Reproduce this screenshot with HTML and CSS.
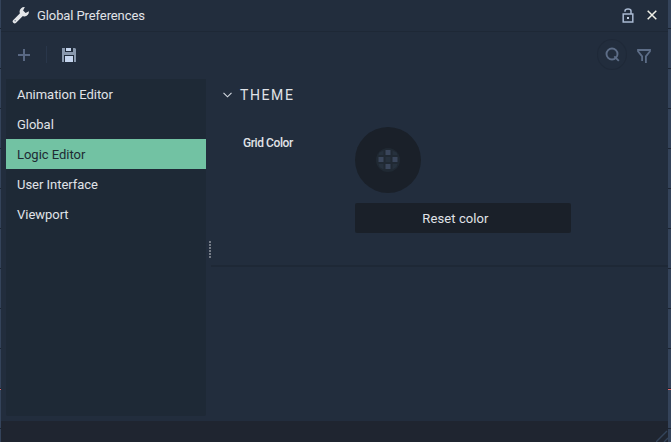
FILE: index.html
```html
<!DOCTYPE html>
<html lang="en">
<head>
<meta charset="utf-8">
<title>Global Preferences</title>
<link rel="stylesheet" href="styles.css">
</head>
<body>
<main class="window">
  <header class="titlebar">
    <svg class="wrench" width="18" height="18" viewBox="0 0 18 18"><path d="M2.7 15.3 10.2 7.8" stroke="#e4e6e9" stroke-width="4" stroke-linecap="round"/><path d="M12.8 1.1A4.7 4.7 0 1 0 16.9 5.2L13.6 6.9 11.1 4.4Z" fill="#e4e6e9"/><circle cx="3.2" cy="14.8" r=".8" fill="#758091"/></svg>
    <h1>Global Preferences</h1>
    <svg class="lock" width="12" height="15" viewBox="0 0 12 15" fill="none" stroke="#a9b9d2" stroke-width="1.5"><rect x="1.2" y="6" width="9.6" height="8"/><path d="M3 3.8V3Q3 1 6 1T9 3V6"/><rect x="5" y="9" width="2" height="2" fill="#c2cee0" stroke="none"/></svg>
    <svg class="close" width="10" height="10" viewBox="0 0 10 10" stroke="#f0f0e8" stroke-width="1.5"><path d="M.7.7 9.3 9.3M9.3.7.7 9.3"/></svg>
  </header>
  <div class="toolbar">
    <svg class="add" width="12" height="12" viewBox="0 0 12 12" stroke="#596883" stroke-width="2"><path d="M6 0V12M0 6H12"/></svg>
    <span class="separator"></span>
    <svg class="save" width="14" height="14" viewBox="0 0 14 14"><path d="M0 0H13L14 1V14H0Z" fill="#8998ad"/><path d="M3 0H11V4H3ZM2 7H12V14H2Z" fill="#202b3a"/><path d="M4 0H9V3H4ZM3 8H11V14H3Z" fill="#c5d5ee"/></svg>
    <span class="search"><svg width="15" height="15" viewBox="0 0 15 15" fill="none" stroke="#5d6d87" stroke-width="1.9"><circle cx="7" cy="7" r="5.5"/><path d="M9.3 9.3 13.8 13.8"/></svg></span>
    <svg class="filter" width="14" height="14" viewBox="0 0 14 14" fill="none" stroke="#5d6d87" stroke-width="1.8"><path d="M5.1 12V7.4L1 2.3V1H13V2.3L8.9 7.4V14"/></svg>
  </div>
  <div class="content">
    <nav class="categories">
      <div class="item">Animation Editor</div>
      <div class="item">Global</div>
      <div class="item selected">Logic Editor</div>
      <div class="item">User Interface</div>
      <div class="item">Viewport</div>
    </nav>
    <div class="splitter"><i></i><i></i><i></i><i></i><i></i><i></i></div>
    <section class="panel">
      <h2><svg width="9" height="6" viewBox="0 0 9 6" fill="none" stroke="#d5dae2" stroke-width="1.1"><path d="M.5.8 4.5 4.8 8.5.8"/></svg><span>THEME</span></h2>
      <div class="setting">
        <span class="label">Grid Color</span>
        <div class="control">
          <div class="wheel"><svg width="24" height="24" viewBox="0 0 24 24"><circle cx="12" cy="12" r="12" fill="#202933"/><path d="M9.5 2H14.5V7H9.5ZM2.5 9H7.5V14H2.5ZM16.5 9H21.5V14H16.5ZM9.5 16H14.5V21H9.5Z" fill="#3a465b"/><path d="M9.5 9H14.5V14H9.5ZM3.5 4.5 7.5 2.5V7H2.5ZM16.5 2.5 20.5 4.5 21.5 7H16.5ZM2.5 16H7.5V21.5L3.5 19ZM16.5 16H21.5L20.5 19 16.5 21.5Z" fill="#26313d"/></svg></div>
          <button>Reset color</button>
        </div>
      </div>
    </section>
  </div>
  <footer><svg width="12" height="12" viewBox="0 0 12 12" stroke="#34445a" stroke-width="1.4"><path d="M0 12 11 1M8 12 12 8"/></svg></footer>
</main>
</body>
</html>
```

FILE: styles.css
```css
* { box-sizing: border-box; }
svg { display: block; flex: none; }
body {
  margin: 0;
  height: 442px;
  padding: 0 3px 0 1px;
  overflow: hidden;
  font: 13px/30px Roboto, sans-serif;
  color: #e0e3e8;
  background: linear-gradient(#e06868, #e06868) 0 389px / 100% 1px no-repeat,
    repeating-linear-gradient(to bottom, #34435a 0 28px, #1c2533 28px 29px, #34435a 29px 40px);
}
.window { height: 442px; display: flex; flex-direction: column; background: #222d3d; }
.titlebar { height: 32px; flex: none; display: flex; align-items: center; padding: 0 11px; border-bottom: 1px solid #1e2836; }
.wrench { margin: -2px 7px 0 0; }
h1 { margin: 0; font-size: 13px; font-weight: 400; letter-spacing: -.1px; }
.lock { margin-left: auto; margin-top: -1px; }
.close { margin-left: 13px; margin-top: -1px; }
.toolbar { height: 47px; flex: none; display: flex; align-items: center; padding: 0 17px 2px; }
.separator { width: 1px; height: 17px; margin: 0 15px 0 16px; background: #29364a; }
.search { width: 30px; height: 31px; display: grid; place-items: center; margin-left: auto; border: 1px solid #1f2938; border-radius: 50%; }
.filter { margin-left: 10px; margin-top: 2px; }
.content { flex: 1; display: flex; min-height: 0; }
.categories { width: 200px; height: 337px; margin-left: 5px; border-radius: 0 0 2px 2px; background: #1e2936; }
.item { height: 30px; padding: 1px 0 0 11px; letter-spacing: -.03px; }
.selected { color: #202a33; background: #72c2a3; }
.splitter { width: 5px; display: flex; flex-direction: column; gap: 1px; padding: 162px 0 0 3px; }
.splitter i { width: 2px; height: 2px; background: #747b86; }
.panel { flex: 1; height: 188px; border-bottom: 2px solid #1e2836; }
h2 { height: 30px; margin: 0; display: flex; align-items: center; gap: 8px; padding: 1px 0 0 12px; font-size: 14px; font-weight: 400; letter-spacing: 1.6px; }
.setting { display: flex; padding: 18px 0 0 32px; }
.label { width: 112px; font-size: 12px; font-weight: 500; letter-spacing: -.42px; line-height: 32px; }
.wheel { width: 66px; height: 66px; display: grid; place-items: center; border-radius: 50%; background: #1a2029; }
button { display: block; width: 216px; height: 30px; margin: 10px 0 0; padding: 1px 15px 0 0; border: 0; border-radius: 2px; font: 13px/29px Roboto, sans-serif; letter-spacing: .1px; color: #e0e3e8; background: #1a2029; }
footer { height: 21px; flex: none; display: flex; justify-content: flex-end; align-items: flex-end; background: #1f2530; }
```
